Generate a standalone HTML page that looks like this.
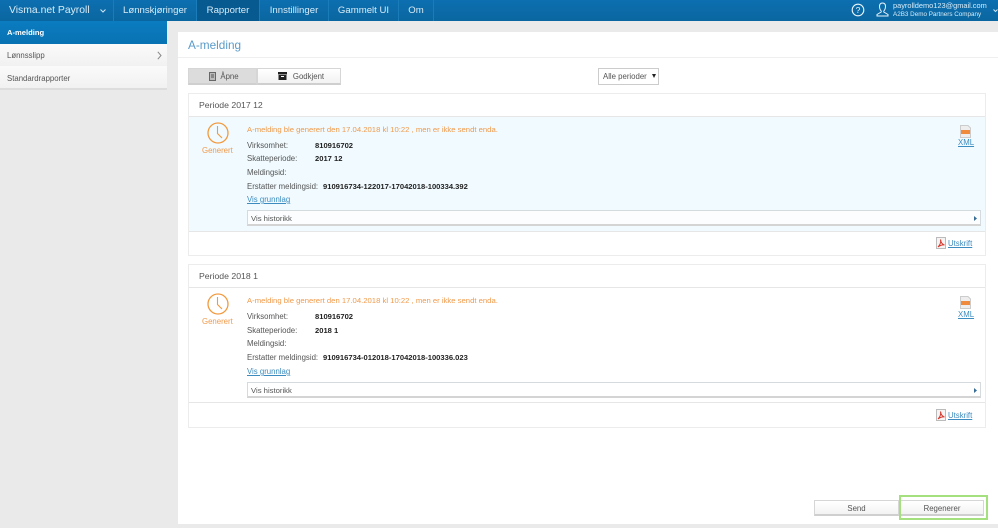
<!DOCTYPE html>
<html><head><meta charset="utf-8"><style>
*{box-sizing:border-box}
html,body{margin:0;padding:0}
body{width:998px;height:528px;overflow:hidden;position:relative;background:#eaeaea;font-family:"Liberation Sans",sans-serif;font-size:7.7px;color:#444}
body>*{filter:blur(.25px)}
.a{position:absolute;white-space:nowrap}
#nav{left:0;top:0;width:998px;height:21px;background:linear-gradient(#0d6fb0,#0a669f)}
.n{position:absolute;top:0;height:21px;line-height:21px;color:#d8ecf8;font-size:9.6px;text-align:center;border-right:1px solid #1a7cb8}
.side{left:0;width:167px;background:linear-gradient(#fafafa,#f1f1f1);padding-left:7px;color:#555;font-size:7.8px}
.card{position:absolute;left:188px;width:798px;height:163px;background:#fff;border:1px solid #ececec}
.ch{position:absolute;left:10px;top:4px;font-size:8.7px;color:#555;line-height:14px}
.blue{position:absolute;left:0;top:22px;width:796px;height:116px;background:#f0faff;border-top:1px solid #e6e6e6;border-bottom:1px solid #e6e6e6}
.t{position:absolute;white-space:nowrap;line-height:12px;font-size:7.8px;color:#555}
.b{font-weight:bold;color:#222;font-size:7.6px}
.o{color:#f09a4a}
.l{color:#3d8cc0;text-decoration:underline}
.btn{position:absolute;background:linear-gradient(#fff,#f2f2f2);border:1px solid #d6d6d6;border-bottom:2px solid #cfcfcf;text-align:center;color:#555;font-size:7.8px}
.g{position:absolute;background:#a5e07f}
</style></head><body>
<div class="a" id="nav"></div>
<div class="n" style="left:0;width:114px;text-align:left;padding-left:9px;font-size:10.4px">Visma.net Payroll<svg style="position:absolute;left:100px;top:9px" width="6" height="4"><path d="M.5.5 3 3 5.500.5" stroke="#cfe6f5" fill="none"/></svg></div>
<div class="n" style="left:114px;width:83px">Lønnskjøringer</div>
<div class="n" style="left:197px;width:63px;background:#075a90">Rapporter</div>
<div class="n" style="left:260px;width:69px">Innstillinger</div>
<div class="n" style="left:329px;width:70px">Gammelt UI</div>
<div class="n" style="left:399px;width:35px">Om</div>
<svg class="a" style="left:851px;top:3px" width="14" height="14" viewBox="0 0 14 14"><circle cx="7" cy="7" r="5.800" fill="none" stroke="#eaf5fc" stroke-width="1.100"/><text x="7" y="10" text-anchor="middle" font-size="8.500" font-family="Liberation Sans" fill="#eaf5fc">?</text></svg>
<svg class="a" style="left:876px;top:2px" width="13" height="15" viewBox="0 0 13 15"><path d="M6.500 1C4.500 1 3.500 2.500 3.500 4.500 3.500 6.500 4.500 8.500 5.200 9V10L1 12.500V14H12V12.500L7.800 10V9C8.500 8.500 9.500 6.500 9.500 4.500 9.500 2.500 8.500 1 6.500 1Z" fill="none" stroke="#eaf5fc"/></svg>
<div class="a" style="left:893px;top:1px;color:#d8ecf8;font-size:7.4px;line-height:10px">payrolldemo123@gmail.com</div>
<div class="a" style="left:893px;top:10px;color:#d8ecf8;font-size:6.3px;line-height:9px">A2B3 Demo Partners Company</div>
<svg class="a" style="left:993px;top:9px" width="5" height="4"><path d="M.5.5 2.500 2.500 4.500.5" stroke="#cfe6f5" fill="none"/></svg>

<div class="a" style="left:0;top:21px;width:167px;height:23px;background:linear-gradient(#0b7cc0,#0872b3);color:#fff;font-weight:bold;font-size:7.6px;line-height:23px;padding-left:7px">A-melding</div>
<div class="a side" style="top:44px;height:22px;line-height:24px">Lønnsslipp<svg style="position:absolute;left:157px;top:7px" width="5" height="9"><path d="M.8.800 4 4.500.8 8.200" stroke="#888" fill="none"/></svg></div>
<div class="a side" style="top:66px;height:24px;line-height:25px;border-bottom:2px solid #ddd">Standardrapporter</div>

<div class="a" style="left:178px;top:32px;width:820px;height:492px;background:#fff"></div>
<div class="a" style="left:178px;top:57px;width:820px;height:1px;background:#efefef"></div>
<div class="a" style="left:188px;top:38px;font-size:11.800px;line-height:15px;color:#5b9bc9">A-melding</div>

<div class="btn" style="left:188px;top:68px;width:69px;height:17px;background:#dcdcdc;line-height:15px;padding-left:14px">Åpne</div>
<svg class="a" style="left:209px;top:72px" width="7" height="9"><rect x=".5" y=".5" width="6" height="8" fill="#bbb" stroke="#666"/><path d="M2 3h3M2 5h3" stroke="#555"/></svg>
<div class="btn" style="left:257px;top:68px;width:84px;height:17px;line-height:15px;padding-left:19px">Godkjent</div>
<svg class="a" style="left:278px;top:72px" width="9" height="8"><rect width="9" height="2.500" fill="#222"/><rect x=".5" y="3" width="8" height="5" fill="#222"/><rect x="3" y="4" width="3" height="1" fill="#fff"/></svg>

<div class="a" style="left:598px;top:68px;width:61px;height:17px;background:#fff;border:1px solid #ccc;line-height:15px;padding-left:4px;color:#555;font-size:7.800px">Alle perioder<svg style="position:absolute;left:53px;top:5px" width="4" height="4"><path d="M0 0H4L2 4Z" fill="#222"/></svg></div>

<div class="card" style="top:93px">
<div class="ch">Periode 2017 12</div>
<div class="blue">
<svg class="a" style="left:18px;top:5px" width="22" height="22" viewBox="0 0 22 22"><circle cx="11" cy="11" r="10" fill="none" stroke="#f29a3e" stroke-width="1.300"/><path d="M10.500 4V11.500L15 16" fill="none" stroke="#f29a3e" stroke-width="1.100"/></svg>
<div class="t o" style="left:13px;top:28px">Generert</div>
<div class="t o" style="left:58px;top:7px;font-size:7.700px">A-melding ble generert den 17.04.2018 kl 10:22 , men er ikke sendt enda.</div>
<div class="t" style="left:58px;top:23px">Virksomhet:</div><div class="t b" style="left:126px;top:23px">810916702</div>
<div class="t" style="left:58px;top:36px">Skatteperiode:</div><div class="t b" style="left:126px;top:36px">2017 12</div>
<div class="t" style="left:58px;top:50px">Meldingsid:</div>
<div class="t" style="left:58px;top:64px">Erstatter meldingsid:</div><div class="t b" style="left:134px;top:64px">910916734-122017-17042018-100334.392</div>
<div class="t l" style="left:58px;top:77px">Vis grunnlag</div>
<div class="a" style="left:58px;top:93px;width:734px;height:16px;background:#fbfdfe;border:1px solid #d4dadd;border-bottom:2px solid #d4d4d4;line-height:15px;padding-left:3px;color:#555">Vis historikk<svg style="position:absolute;right:3px;top:5px" width="3" height="5"><path d="M0 0 3 2.500 0 5Z" fill="#3a6d96"/></svg></div>
<svg class="a" style="left:771px;top:8px" width="11" height="13" viewBox="0 0 11 13"><path d="M.5.500H8L10.500 3V12.500H.5Z" fill="#eee" stroke="#ccc"/><rect x="1" y="5" width="9" height="4" fill="#f08a3c"/></svg>
<div class="t l" style="left:769px;top:20px">XML</div>
</div>
<svg class="a" style="left:747px;top:143px" width="10" height="12" viewBox="0 0 10 12"><path d="M.5.500H9.500V11.500H.5Z" fill="#f4f4f4" stroke="#bbb"/><path d="M2 10C4 8 5 5 4.500 2.500 5 6 6.500 7.500 8.500 8 6 7.500 4 8.500 2 10Z" fill="none" stroke="#d6382c"/></svg>
<div class="t l" style="left:759px;top:144px;font-size:7.800px">Utskrift</div>
</div>

<div class="card" style="top:264px;height:164px">
<div class="ch">Periode 2018 1</div>
<div class="blue" style="background:#fff;top:22px">
<svg class="a" style="left:18px;top:5px" width="22" height="22" viewBox="0 0 22 22"><circle cx="11" cy="11" r="10" fill="none" stroke="#f29a3e" stroke-width="1.300"/><path d="M10.500 4V11.500L15 16" fill="none" stroke="#f29a3e" stroke-width="1.100"/></svg>
<div class="t o" style="left:13px;top:28px">Generert</div>
<div class="t o" style="left:58px;top:7px;font-size:7.700px">A-melding ble generert den 17.04.2018 kl 10:22 , men er ikke sendt enda.</div>
<div class="t" style="left:58px;top:23px">Virksomhet:</div><div class="t b" style="left:126px;top:23px">810916702</div>
<div class="t" style="left:58px;top:37px">Skatteperiode:</div><div class="t b" style="left:126px;top:37px">2018 1</div>
<div class="t" style="left:58px;top:50px">Meldingsid:</div>
<div class="t" style="left:58px;top:64px">Erstatter meldingsid:</div><div class="t b" style="left:134px;top:64px">910916734-012018-17042018-100336.023</div>
<div class="t l" style="left:58px;top:78px">Vis grunnlag</div>
<div class="a" style="left:58px;top:94px;width:734px;height:16px;background:#fff;border:1px solid #d4dadd;border-bottom:2px solid #d4d4d4;line-height:15px;padding-left:3px;color:#555">Vis historikk<svg style="position:absolute;right:3px;top:5px" width="3" height="5"><path d="M0 0 3 2.500 0 5Z" fill="#3a6d96"/></svg></div>
<svg class="a" style="left:771px;top:8px" width="11" height="13" viewBox="0 0 11 13"><path d="M.5.500H8L10.500 3V12.500H.5Z" fill="#eee" stroke="#ccc"/><rect x="1" y="5" width="9" height="4" fill="#f08a3c"/></svg>
<div class="t l" style="left:769px;top:21px">XML</div>
</div>
<svg class="a" style="left:747px;top:144px" width="10" height="12" viewBox="0 0 10 12"><path d="M.5.500H9.500V11.500H.5Z" fill="#f4f4f4" stroke="#bbb"/><path d="M2 10C4 8 5 5 4.500 2.500 5 6 6.500 7.500 8.500 8 6 7.500 4 8.500 2 10Z" fill="none" stroke="#d6382c"/></svg>
<div class="t l" style="left:759px;top:145px;font-size:7.800px">Utskrift</div>
</div>

<div class="btn" style="left:814px;top:500px;width:85px;height:16px;line-height:15px">Send</div>
<div class="btn" style="left:900px;top:500px;width:84px;height:16px;line-height:15px">Regenerer</div>
<div class="g" style="left:899px;top:495px;width:89px;height:2px"></div>
<div class="g" style="left:899px;top:518px;width:89px;height:2px"></div>
<div class="g" style="left:899px;top:495px;width:2px;height:25px"></div>
<div class="g" style="left:986px;top:495px;width:2px;height:25px"></div>
</body></html>
